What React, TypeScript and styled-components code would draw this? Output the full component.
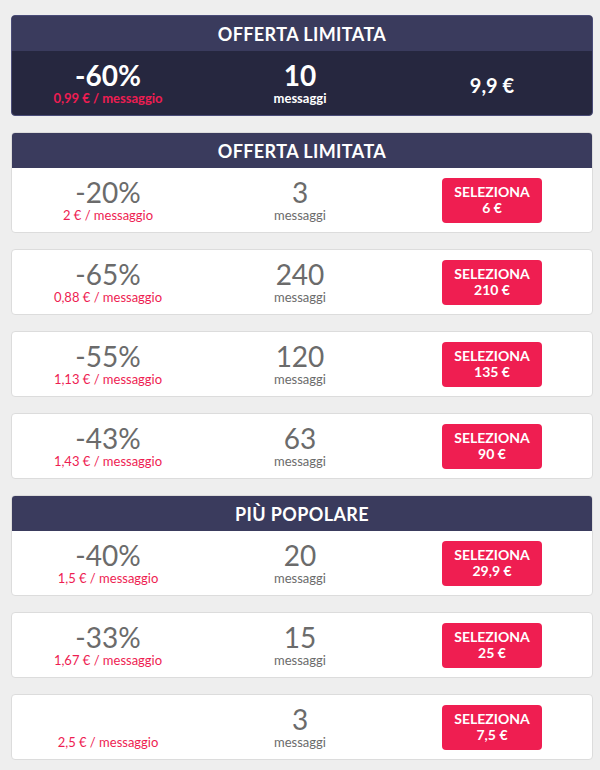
import styled, { createGlobalStyle } from "styled-components"

const GlobalStyle = createGlobalStyle`
  html, body {
    margin: 0;
    padding: 0;
    background: #eeeeee;
  }
  body {
    font-family: Lato, "Open Sans", "Liberation Sans", sans-serif;
  }
`

type Pack = {
  discount?: string
  unit: string
  count: string
  price: string
}

const limited: Pack[] = [
  { discount: "-20%", unit: "2 € / messaggio", count: "3", price: "6 €" },
]

const rest: Pack[] = [
  { discount: "-65%", unit: "0,88 € / messaggio", count: "240", price: "210 €" },
  { discount: "-55%", unit: "1,13 € / messaggio", count: "120", price: "135 €" },
  { discount: "-43%", unit: "1,43 € / messaggio", count: "63", price: "90 €" },
]

const popular: Pack[] = [
  { discount: "-40%", unit: "1,5 € / messaggio", count: "20", price: "29,9 €" },
]

const last: Pack[] = [
  { discount: "-33%", unit: "1,67 € / messaggio", count: "15", price: "25 €" },
  { unit: "2,5 € / messaggio", count: "3", price: "7,5 €" },
]

const Row = ({ p }: { p: Pack }) => (
  <Body>
    <Col>
      <Big>{p.discount || "\u00a0"}</Big>
      <Unit>{p.unit}</Unit>
    </Col>
    <Col>
      <Big>{p.count}</Big>
      <Small>messaggi</Small>
    </Col>
    <Col>
      <Select>
        SELEZIONA
        <span>{p.price}</span>
      </Select>
    </Col>
  </Body>
)

const App = () => {
  return (
    <Page>
      <GlobalStyle />
      <Card $dark>
        <Header>OFFERTA LIMITATA</Header>
        <Body $dark>
          <Col>
            <Big $bold>-60%</Big>
            <Unit $bold>0,99 € / messaggio</Unit>
          </Col>
          <Col>
            <Big $bold>10</Big>
            <Small $bold>messaggi</Small>
          </Col>
          <Col>
            <Price>9,9 €</Price>
          </Col>
        </Body>
      </Card>

      <Card>
        <Header>OFFERTA LIMITATA</Header>
        {limited.map((p, i) => (
          <Row key={i} p={p} />
        ))}
      </Card>

      {rest.map((p, i) => (
        <Card key={i}>
          <Row p={p} />
        </Card>
      ))}

      <Card>
        <Header>PIÙ POPOLARE</Header>
        {popular.map((p, i) => (
          <Row key={i} p={p} />
        ))}
      </Card>

      {last.map((p, i) => (
        <Card key={i}>
          <Row p={p} />
        </Card>
      ))}
    </Page>
  )
}

export default App

const Page = styled.div`
  width: 582px;
  padding: 15px 7px 10px 11px;
  display: flex;
  flex-direction: column;
  gap: 16px;
`

const Card = styled.div<{ $dark?: boolean }>`
  border: 1px solid ${(p) => (p.$dark ? "#4a4c78" : "#dcdcdc")};
  border-radius: 4px;
  overflow: hidden;
  background: ${(p) => (p.$dark ? "#26273f" : "#fff")};
`

const Header = styled.div`
  height: 35px;
  display: flex;
  align-items: center;
  justify-content: center;
  background: #3a3b5d;
  color: #fff;
  font-size: 18px;
  font-weight: 700;
  letter-spacing: 0.4px;
`

const Body = styled.div<{ $dark?: boolean }>`
  height: 64px;
  display: grid;
  grid-template-columns: 1fr 1fr 1fr;
  padding-right: 4px;
  color: ${(p) => (p.$dark ? "#fff" : "#6b6b6b")};
`

const Col = styled.div`
  display: flex;
  flex-direction: column;
  align-items: center;
  justify-content: center;
  gap: 2px;
`

const Big = styled.div<{ $bold?: boolean }>`
  font-size: 28px;
  line-height: 28px;
  font-weight: ${(p) => (p.$bold ? 700 : 400)};
`

const Unit = styled.div<{ $bold?: boolean }>`
  font-size: 13px;
  line-height: 14px;
  color: #ee1d52;
  font-weight: ${(p) => (p.$bold ? 700 : 400)};
`

const Small = styled.div<{ $bold?: boolean }>`
  font-size: 13px;
  line-height: 14px;
  font-weight: ${(p) => (p.$bold ? 700 : 400)};
`

const Price = styled.div`
  font-size: 20px;
  font-weight: 700;
  margin-top: 4px;
`

const Select = styled.button`
  width: 100px;
  height: 45px;
  border: none;
  border-radius: 4px;
  background: #ef1e51;
  color: #fff;
  font-family: inherit;
  font-size: 14px;
  font-weight: 700;
  line-height: 16px;
  display: flex;
  flex-direction: column;
  align-items: center;
  justify-content: center;
  cursor: pointer;
`
